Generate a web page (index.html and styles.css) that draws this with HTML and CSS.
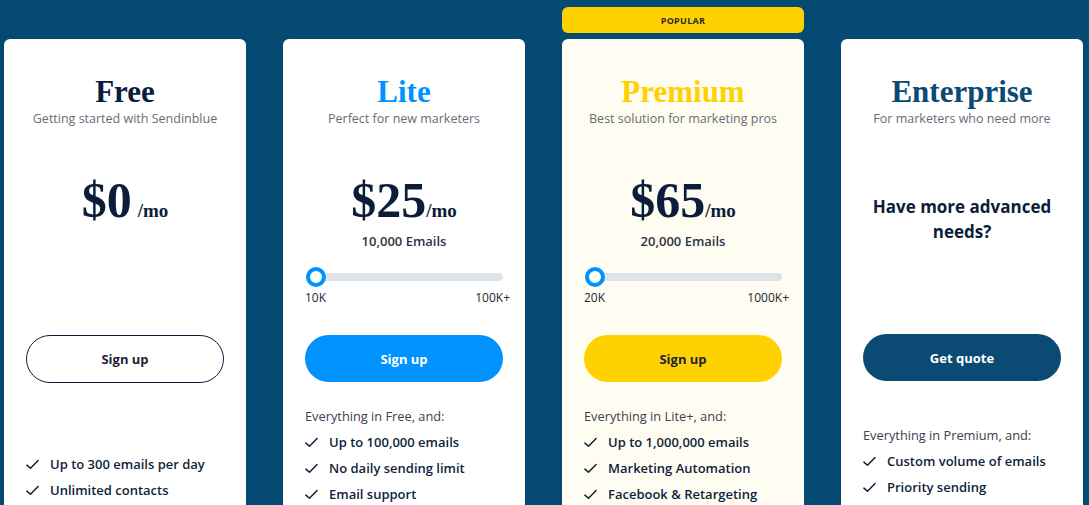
FILE: index.html
```html
<!DOCTYPE html>
<html lang="en">
<head>
<meta charset="utf-8">
<title>Pricing</title>
<link rel="stylesheet" href="styles.css">
</head>
<body>
<main class="plans">
  <section class="plan">
    <div class="badge-slot"></div>
    <div class="card">
      <h2 class="title title-free">Free</h2>
      <p class="tagline">Getting started with Sendinblue</p>
      <div class="pricing">
        <div class="price"><span class="amount">$0</span><span class="per per-spaced">/mo</span></div>
      </div>
      <a class="btn btn-outline">Sign up</a>
      <div class="features features-free">
        <ul class="list">
          <li><svg class="check" viewBox="0 0 14 11"><path d="M1 6.2 L4.8 9.6 L13 1.2"/></svg>Up to 300 emails per day</li>
          <li><svg class="check" viewBox="0 0 14 11"><path d="M1 6.2 L4.8 9.6 L13 1.2"/></svg>Unlimited contacts</li>
        </ul>
      </div>
    </div>
  </section>

  <section class="plan">
    <div class="badge-slot"></div>
    <div class="card">
      <h2 class="title title-lite">Lite</h2>
      <p class="tagline">Perfect for new marketers</p>
      <div class="pricing">
        <div class="price"><span class="amount">$25</span><span class="per">/mo</span></div>
        <p class="emails">10,000 Emails</p>
        <div class="slider"><span class="thumb"></span></div>
        <div class="range"><span>10K</span><span>100K+</span></div>
      </div>
      <a class="btn btn-blue">Sign up</a>
      <div class="features">
        <p class="intro">Everything in Free, and:</p>
        <ul class="list">
          <li><svg class="check" viewBox="0 0 14 11"><path d="M1 6.2 L4.8 9.6 L13 1.2"/></svg>Up to 100,000 emails</li>
          <li><svg class="check" viewBox="0 0 14 11"><path d="M1 6.2 L4.8 9.6 L13 1.2"/></svg>No daily sending limit</li>
          <li><svg class="check" viewBox="0 0 14 11"><path d="M1 6.2 L4.8 9.6 L13 1.2"/></svg>Email support</li>
        </ul>
      </div>
    </div>
  </section>

  <section class="plan">
    <div class="badge-slot"><span class="badge">POPULAR</span></div>
    <div class="card card-premium">
      <h2 class="title title-premium">Premium</h2>
      <p class="tagline">Best solution for marketing pros</p>
      <div class="pricing">
        <div class="price"><span class="amount">$65</span><span class="per">/mo</span></div>
        <p class="emails">20,000 Emails</p>
        <div class="slider"><span class="thumb"></span></div>
        <div class="range"><span>20K</span><span>1000K+</span></div>
      </div>
      <a class="btn btn-yellow">Sign up</a>
      <div class="features">
        <p class="intro">Everything in Lite+, and:</p>
        <ul class="list">
          <li><svg class="check" viewBox="0 0 14 11"><path d="M1 6.2 L4.8 9.6 L13 1.2"/></svg>Up to 1,000,000 emails</li>
          <li><svg class="check" viewBox="0 0 14 11"><path d="M1 6.2 L4.8 9.6 L13 1.2"/></svg>Marketing Automation</li>
          <li><svg class="check" viewBox="0 0 14 11"><path d="M1 6.2 L4.8 9.6 L13 1.2"/></svg>Facebook &amp; Retargeting</li>
        </ul>
      </div>
    </div>
  </section>

  <section class="plan">
    <div class="badge-slot"></div>
    <div class="card">
      <h2 class="title title-enterprise">Enterprise</h2>
      <p class="tagline">For marketers who need more</p>
      <div class="pricing pricing-enterprise">
        <p class="advanced">Have more advanced needs?</p>
      </div>
      <a class="btn btn-navy">Get quote</a>
      <div class="features features-enterprise">
        <p class="intro">Everything in Premium, and:</p>
        <ul class="list">
          <li><svg class="check" viewBox="0 0 14 11"><path d="M1 6.2 L4.8 9.6 L13 1.2"/></svg>Custom volume of emails</li>
          <li><svg class="check" viewBox="0 0 14 11"><path d="M1 6.2 L4.8 9.6 L13 1.2"/></svg>Priority sending</li>
        </ul>
      </div>
    </div>
  </section>
</main>
</body>
</html>
```

FILE: styles.css
```css
* { box-sizing: border-box; }
html, body { margin: 0; padding: 0; }
body {
  background: #054a73;
  font-family: "Open Sans", "Liberation Sans", sans-serif;
  color: #0b1d3a;
  overflow: hidden;
  height: 505px;
}
.plans {
  display: grid;
  grid-template-columns: repeat(4, 242px);
  column-gap: 37px;
  padding: 7px 0 0 4px;
}
.plan {
  display: flex;
  flex-direction: column;
  gap: 6px;
}
.badge-slot {
  height: 26px;
  display: flex;
}
.badge {
  flex: 1;
  background: #ffd100;
  border-radius: 6px;
  font-size: 9px;
  font-weight: 700;
  letter-spacing: 0.3px;
  color: #2b2b2b;
  display: flex;
  align-items: center;
  justify-content: center;
}
.card {
  background: #ffffff;
  border-radius: 6px;
  min-height: 520px;
  padding: 35px 22px 0;
  display: flex;
  flex-direction: column;
}
.card-premium { background: #fffdf2; }
.title {
  margin: 0;
  font-family: "Liberation Serif", "Times New Roman", serif;
  font-weight: 700;
  font-size: 31px;
  line-height: 36px;
  text-align: center;
}
.title-free { color: #0b1d3a; }
.title-lite { color: #0092ff; }
.title-premium { color: #ffd100; }
.title-enterprise { color: #0b4a72; }
.tagline {
  margin: 0;
  font-size: 12.5px;
  line-height: 18px;
  color: #676d76;
  text-align: center;
}
.pricing {
  height: 207px;
  padding-top: 44px;
  display: flex;
  flex-direction: column;
}
.price {
  display: flex;
  justify-content: center;
  align-items: baseline;
  height: 56px;
  line-height: 56px;
  font-family: "Liberation Serif", "Times New Roman", serif;
  font-weight: 700;
  color: #0b1d3a;
}
.amount { font-size: 50px; }
.per { font-size: 19px; }
.per-spaced { margin-left: 6px; }
.emails {
  margin: 4px 0 0;
  font-size: 13px;
  line-height: 18px;
  font-weight: 600;
  color: #2b3445;
  text-align: center;
}
.slider {
  margin-top: 23px;
  height: 8px;
  border-radius: 4px;
  background: #dee3ea;
  position: relative;
  margin-left: 1px;
}
.thumb {
  position: absolute;
  left: 0;
  top: -6px;
  width: 20px;
  height: 20px;
  border-radius: 50%;
  background: #ffffff;
  border: 4px solid #0092ff;
}
.range {
  margin-top: 8px;
  display: flex;
  justify-content: space-between;
  font-size: 12px;
  line-height: 18px;
  color: #1f2733;
  margin-right: -7px;
}
.pricing-enterprise { padding-top: 66px; }
.advanced {
  margin: 0;
  font-size: 17px;
  line-height: 25px;
  font-weight: 700;
  color: #0b1d3a;
  text-align: center;
}
.btn {
  display: flex;
  align-items: center;
  justify-content: center;
  height: 48px;
  border-radius: 24px;
  font-size: 13px;
  font-weight: 700;
  text-decoration: none;
}
.btn-outline { border: 1px solid #0b1d3a; color: #1b2536; }
.btn-blue { background: #0092ff; color: #ffffff; height: 47px; }
.btn-yellow { background: #ffd100; color: #1b2536; height: 47px; }
.btn-navy { background: #0b4a72; color: #ffffff; height: 47px; margin-top: -1px; }
.features { padding-top: 25px; }
.features-free { padding-top: 68px; }
.features-enterprise { padding-top: 45px; }
.intro {
  margin: 0 0 4px;
  font-size: 12.8px;
  line-height: 18px;
  color: #3a4150;
}
.list {
  list-style: none;
  margin: 0;
  padding: 0;
}
.list li {
  display: flex;
  align-items: center;
  height: 26px;
  font-size: 13px;
  font-weight: 600;
  color: #0f1f3d;
}
.check {
  width: 13px;
  height: 11px;
  margin: 0 11px 0 0;
  fill: none;
  stroke: #0f1f3d;
  stroke-width: 1.6;
  stroke-linecap: round;
  stroke-linejoin: round;
}
```
